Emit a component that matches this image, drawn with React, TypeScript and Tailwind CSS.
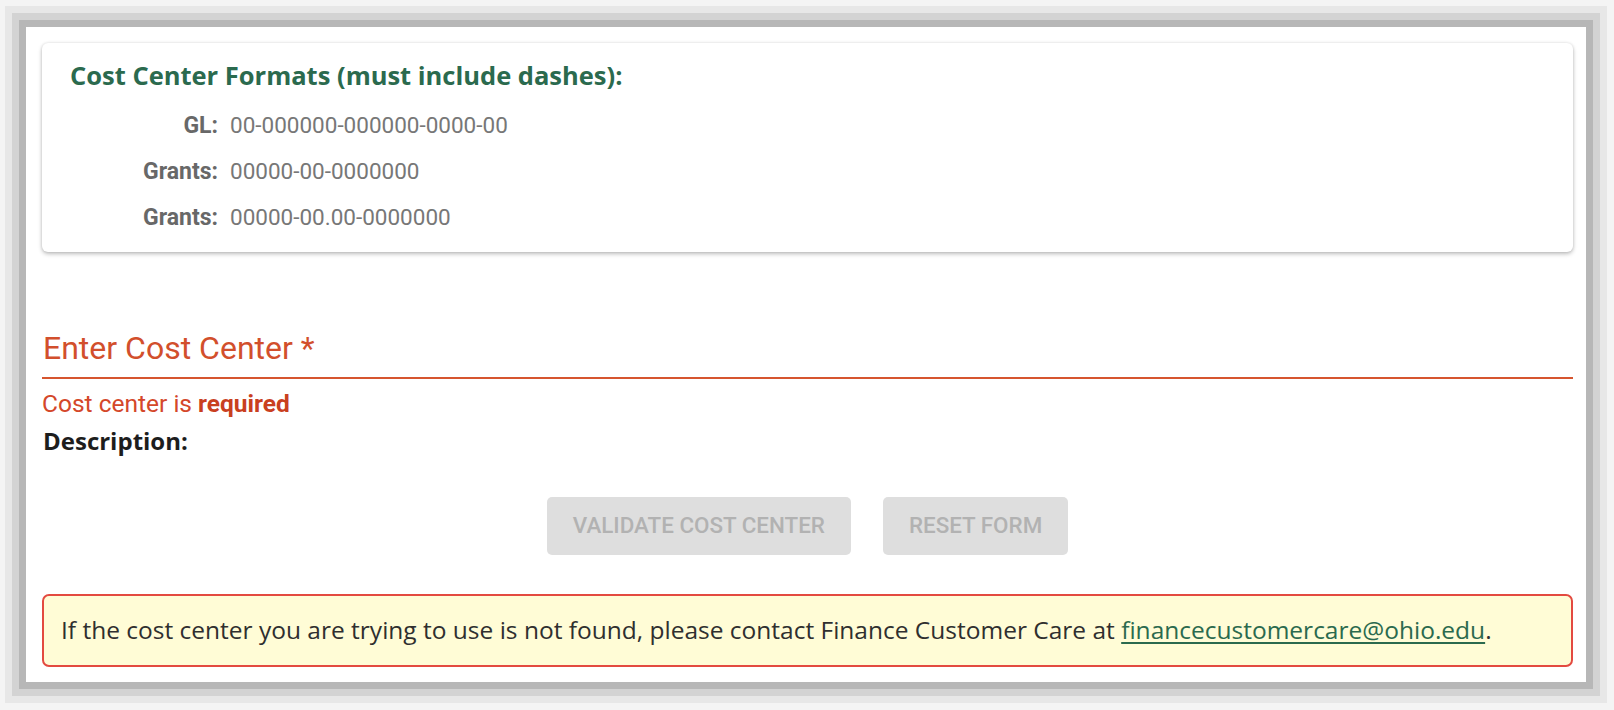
import React from 'react';

const FORMATS = [
  { label: 'GL:', value: '00-000000-000000-0000-00' },
  { label: 'Grants:', value: '00000-00-0000000' },
  { label: 'Grants:', value: '00000-00.00-0000000' },
];

export default function App() {
  return (
    <div className="min-h-screen bg-[#f7f7f7] pt-[27px] pl-[26px] pr-[28px] pb-[28px]">
      {/* white sheet with stepped screenshot shadow */}
      <div className="bg-white pt-4 pb-[15px] pl-4 pr-[13px] shadow-[0_0_0_7px_#b7b7b7,0_0_0_14px_#d3d3d3,0_0_0_21px_#e7e7e7,0_0_0_28px_#f4f4f4]">
        {/* Formats card */}
        <div className="rounded-[6px] bg-white pt-4 pb-[11px] shadow-[0_2px_4px_rgba(0,0,0,0.25),0_0_3px_rgba(0,0,0,0.1)]">
          <h3 className="h-8 pl-[28px] font-['Open_Sans',sans-serif] text-[25.5px] font-bold leading-8 text-[#2b6a4e]">
            Cost Center Formats (must include dashes):
          </h3>
          <div className="mt-3 font-['Roboto',sans-serif] text-[22.5px] text-[#6f6f6f]">
            {FORMATS.map((f, i) => (
              <div key={i} className="flex h-[46px] items-center">
                <span className="w-[176px] text-right text-[23px] font-bold text-[#686868]">{f.label}</span>
                <span className="ml-3 text-[#777777]">{f.value}</span>
              </div>
            ))}
          </div>
        </div>

        {/* Cost center input */}
        <div className="mt-[76px] border-b-2 border-[#d6552f] pb-[9px]">
          <label className="block h-10 pl-[1px] font-['Roboto',sans-serif] text-[32px] leading-10 text-[#d24f2c]">
            Enter Cost Center *
          </label>
        </div>
        <div className="mt-[10px] h-[30px] font-['Roboto',sans-serif] text-[24.5px] leading-[30px] text-[#d4472a]">
          Cost center is <strong className="font-bold text-[#c9401f]">required</strong>
        </div>
        <div className="mt-[6px] h-8 pl-[1px] font-['Open_Sans',sans-serif] text-[24px] font-bold leading-8 text-[#1d1d1d]">
          Description:
        </div>

        {/* Actions */}
        <div className="mt-10 flex justify-center gap-8">
          <button
            disabled
            className="h-[58px] rounded-[5px] bg-[#dedede] px-[26px] font-['Roboto',sans-serif] text-[22.4px] font-medium uppercase text-[#b2b2b2]"
          >
            Validate Cost Center
          </button>
          <button
            disabled
            className="h-[58px] rounded-[5px] bg-[#dedede] px-[26px] font-['Roboto',sans-serif] text-[22.4px] font-medium uppercase text-[#b2b2b2]"
          >
            Reset Form
          </button>
        </div>

        {/* Notice */}
        <div className="mt-[39px] flex h-[73px] items-center rounded-[7px] border-2 border-[#e34a40] bg-[#fffcd6] px-[17px] font-['Open_Sans',sans-serif] text-[24.5px] text-[#2f2f2f]">
          <p>
            If the cost center you are trying to use is not found, please contact Finance Customer Care at{' '}
            <a href="#" className="text-[#2b6a4e] underline underline-offset-[3px]">
              financecustomercare@ohio.edu
            </a>
            .
          </p>
        </div>
      </div>
    </div>
  );
}
